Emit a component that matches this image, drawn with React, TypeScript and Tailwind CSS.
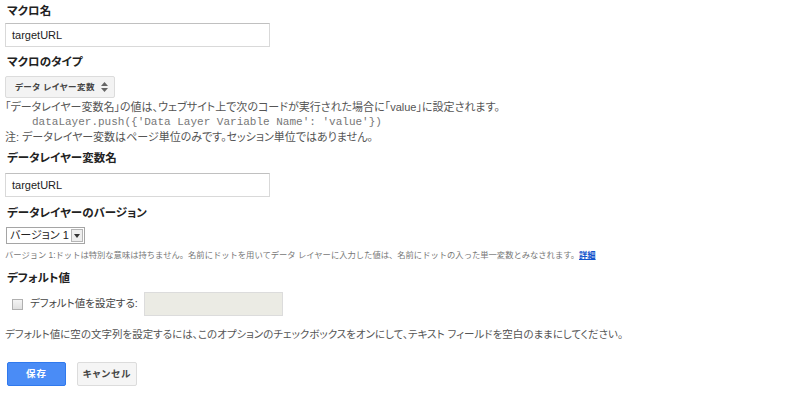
const jp = "font-['Liberation_Sans','Noto_Sans_CJK_JP',sans-serif] [font-feature-settings:'palt']";

function Label({ children, className = "" }: { children: React.ReactNode; className?: string }) {
  return <div className={`h-4 pl-[2px] text-[11.5px] font-bold leading-4 text-[#222] ${className}`}>{children}</div>;
}

function TextInput({ value, className = "" }: { value: string; className?: string }) {
  return (
    <div
      className={`flex h-6 w-[265px] items-center border border-[#d9d9d9] border-t-[#c0c0c0] bg-white px-[6px] text-[11px] text-[#222] ${className}`}
    >
      {value}
    </div>
  );
}

export default function App() {
  return (
    <div className={`${jp} min-h-[408px] w-[800px] bg-white pl-[5px] pt-[3px] text-[#555]`}>
      <Label>マクロ名</Label>
      <TextInput value="targetURL" className="mt-1" />

      <Label className="mt-[7px]">マクロのタイプ</Label>
      <div className="mt-[6px] flex h-[22px] w-[110px] items-center gap-[6px] whitespace-nowrap rounded-[2px] border border-[#dcdcdc] bg-[#f3f3f3] pl-[9px] text-[8.5px] font-bold tracking-[0.5px] text-[#444]">
        <span>データ レイヤー変数</span>
        <svg width="7" height="10" viewBox="0 0 7 10" className="shrink-0 fill-[#666]">
          <path d="M3.5 0 L7 4 H0 Z" />
          <path d="M0 6 H7 L3.5 10 Z" />
        </svg>
      </div>

      <div className="mt-[2px] text-[11px] leading-[15px]">
        <div>「データレイヤー変数名」の値は、ウェブサイト上で次のコードが実行された場合に「value」に設定されます。</div>
        <div className="pl-[27px] font-['Liberation_Mono',monospace] text-[11px] text-[#777]">
          dataLayer.push({"{"}'Data Layer Variable Name': 'value'{"}"})
        </div>
        <div>注: データレイヤー変数はページ単位のみです。セッション単位ではありません。</div>
      </div>

      <Label className="mt-[5px]">データレイヤー変数名</Label>
      <TextInput value="targetURL" className="mt-[7px]" />

      <Label className="mt-2">データレイヤーのバージョン</Label>
      <div className="ml-[1px] mt-[6px] flex h-[17px] w-[79px] items-center border border-[#a5a5a5] bg-white text-[11px] text-[#222]">
        <span className="flex-1 pl-[3px]">バージョン 1</span>
        <span className="mr-[1px] flex h-[13px] w-[12px] items-center justify-center border border-[#b5b5b5] bg-[#eeeeee]">
          <svg width="6" height="4" viewBox="0 0 6 4" className="fill-[#333]">
            <path d="M0 0 H6 L3 4 Z" />
          </svg>
        </span>
      </div>

      <div className="mt-[5px] h-3 whitespace-nowrap text-[8.3px] leading-3 text-[#777] [font-feature-settings:normal]">
        バージョン 1:ドットは特別な意味は持ちません。名前にドットを用いてデータ レイヤーに入力した値は、名前にドットの入った単一変数とみなされます。
        <a className="font-bold text-[#15c] underline">詳細</a>
      </div>

      <Label className="mt-[9px]">デフォルト値</Label>
      <div className="mt-[6px] flex h-6 items-center">
        <span className="ml-[7px] h-[11px] w-[11px] border border-[#b0b0b0] bg-gradient-to-b from-[#f4f4f4] to-[#e0e0e0]" />
        <span className="ml-[7px] text-[10.5px] text-[#444]">デフォルト値を設定する:</span>
        <span className="ml-[6px] h-6 w-[139px] border border-[#dcdcdc] bg-[#ebebe4]" />
      </div>

      <div className="mt-[11px] text-[10.5px] leading-[14px]">
        デフォルト値に空の文字列を設定するには、このオプションのチェックボックスをオンにして、テキスト フィールドを空白のままにしてください。
      </div>

      <div className="ml-[2px] mt-[21px] flex gap-[11px]">
        <button className="flex h-6 w-[59px] items-center justify-center rounded-[2px] border border-[#3079ed] bg-[#4a8cf6] text-[9.5px] font-bold tracking-[1px] text-white">
          保存
        </button>
        <button className="flex h-6 w-[60px] items-center justify-center rounded-[2px] border border-[#dcdcdc] bg-[#f5f5f5] text-[9.5px] font-bold tracking-[1px] text-[#444]">
          キャンセル
        </button>
      </div>
    </div>
  );
}
